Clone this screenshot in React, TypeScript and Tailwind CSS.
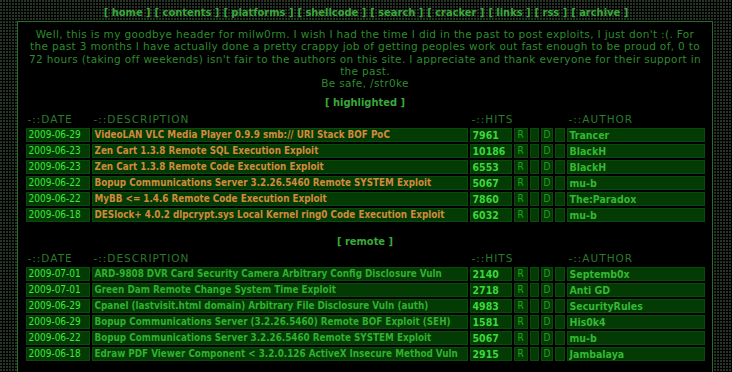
import React from "react";

type Row = {
  date: string;
  desc: string;
  hits: string;
  author: string;
};

const navItems = ["home", "contents", "platforms", "shellcode", "search", "cracker", "links", "rss", "archive"];

const highlighted: Row[] = [
  { date: "2009-06-29", desc: "VideoLAN VLC Media Player 0.9.9 smb:// URI Stack BOF PoC", hits: "7961", author: "Trancer" },
  { date: "2009-06-23", desc: "Zen Cart 1.3.8 Remote SQL Execution Exploit", hits: "10186", author: "BlackH" },
  { date: "2009-06-23", desc: "Zen Cart 1.3.8 Remote Code Execution Exploit", hits: "6553", author: "BlackH" },
  { date: "2009-06-22", desc: "Bopup Communications Server 3.2.26.5460 Remote SYSTEM Exploit", hits: "5067", author: "mu-b" },
  { date: "2009-06-22", desc: "MyBB <= 1.4.6 Remote Code Execution Exploit", hits: "7860", author: "The:Paradox" },
  { date: "2009-06-18", desc: "DESlock+ 4.0.2 dlpcrypt.sys Local Kernel ring0 Code Execution Exploit", hits: "6032", author: "mu-b" },
];

const remote: Row[] = [
  { date: "2009-07-01", desc: "ARD-9808 DVR Card Security Camera Arbitrary Config Disclosure Vuln", hits: "2140", author: "Septemb0x" },
  { date: "2009-07-01", desc: "Green Dam Remote Change System Time Exploit", hits: "2718", author: "Anti GD" },
  { date: "2009-06-29", desc: "Cpanel (lastvisit.html domain) Arbitrary File Disclosure Vuln (auth)", hits: "4983", author: "SecurityRules" },
  { date: "2009-06-29", desc: "Bopup Communications Server (3.2.26.5460) Remote BOF Exploit (SEH)", hits: "1581", author: "His0k4" },
  { date: "2009-06-22", desc: "Bopup Communications Server 3.2.26.5460 Remote SYSTEM Exploit", hits: "5067", author: "mu-b" },
  { date: "2009-06-18", desc: "Edraw PDF Viewer Component < 3.2.0.126 ActiveX Insecure Method Vuln", hits: "2915", author: "Jambalaya" },
];

const cell = "h-[14px] p-0 pl-[2px] bg-[#043a04] border border-[#0a4a0a] whitespace-nowrap overflow-hidden align-middle";
const head = "h-[14px] p-0 pl-[2px] font-normal text-left font-['DejaVu_Sans',sans-serif] text-[10.5px] tracking-[1px]";

function ExploitTable({ title, rows, descColor }: { title: string; rows: Row[]; descColor: string }) {
  return (
    <div className="flex flex-col items-center">
      <div className="h-[14px] leading-[14px] font-bold text-[11px] text-[#3aa83a]">[ {title} ]</div>
      <table className="border-separate border-spacing-[2px] text-[10px] font-bold leading-[12px] w-[683px] table-fixed">
        <colgroup>
          <col className="w-[64px]" />
          <col className="w-[376px]" />
          <col className="w-[42px]" />
          <col className="w-[14px]" />
          <col className="w-[9px]" />
          <col className="w-[12px]" />
          <col className="w-[10px]" />
          <col className="w-[138px]" />
        </colgroup>
        <thead>
          <tr className="text-[#2a7a2a]">
            <th className={head}>-::DATE</th>
            <th className={head}>-::DESCRIPTION</th>
            <th className={head} colSpan={5}>-::HITS</th>
            <th className={head}>-::AUTHOR</th>
          </tr>
        </thead>
        <tbody>
          {rows.map((r, i) => (
            <tr key={i}>
              <td className={`${cell} text-[#3ce83c] font-normal`}>{r.date}</td>
              <td className={`${cell} ${descColor} text-[9.8px]`}>{r.desc}</td>
              <td className={`${cell} text-[#3ad83a] text-[10.5px]`}>{r.hits}</td>
              <td className={`${cell} text-[#22a322] font-normal pl-[3px]`}>R</td>
              <td className={cell}></td>
              <td className={`${cell} text-[#22a322] font-normal pl-[2px]`}>D</td>
              <td className={cell}></td>
              <td className={`${cell} text-[#33b833] text-[10.5px]`}>{r.author}</td>
            </tr>
          ))}
        </tbody>
      </table>
    </div>
  );
}

export default function App() {
  return (
    <div className="w-[732px] h-[372px] overflow-hidden bg-black bg-[radial-gradient(circle_at_1px_1px,#263326_0.9px,transparent_1px)] bg-size-[3px_3px] font-['Tahoma','DejaVu_Sans_Condensed','Liberation_Sans',sans-serif]">
      <nav className="h-[21px] flex items-center justify-center pt-[5px] text-[11px] font-bold text-[#3aa83a] gap-[4px]">
        {navItems.map((n) => (
          <span key={n}>[ {n} ]</span>
        ))}
      </nav>
      <div className="ml-[17px] w-[696px] h-[360px] border border-[#2a6a2a] bg-black px-[6px] pt-[6px]">
        {/* goodbye note */}
        <p className="text-center whitespace-nowrap text-[10.5px] tracking-[0.35px] leading-[12.25px] text-[#2e8b2e] font-['DejaVu_Sans',sans-serif]">
          Well, this is my goodbye header for milw0rm. I wish I had the time I did in the past to post exploits, I just don't :(. For
          <br />
          the past 3 months I have actually done a pretty crappy job of getting peoples work out fast enough to be proud of, 0 to
          <br />
          72 hours (taking off weekends) isn't fair to the authors on this site. I appreciate and thank everyone for their support in
          <br />
          the past.
          <br />
          Be safe, /str0ke
        </p>
        <div className="mt-[7px]">
          <ExploitTable title="highlighted" rows={highlighted} descColor="text-[#d08a3c]" />
        </div>
        <div className="mt-[11px]">
          <ExploitTable title="remote" rows={remote} descColor="text-[#2fb02f]" />
        </div>
      </div>
    </div>
  );
}
